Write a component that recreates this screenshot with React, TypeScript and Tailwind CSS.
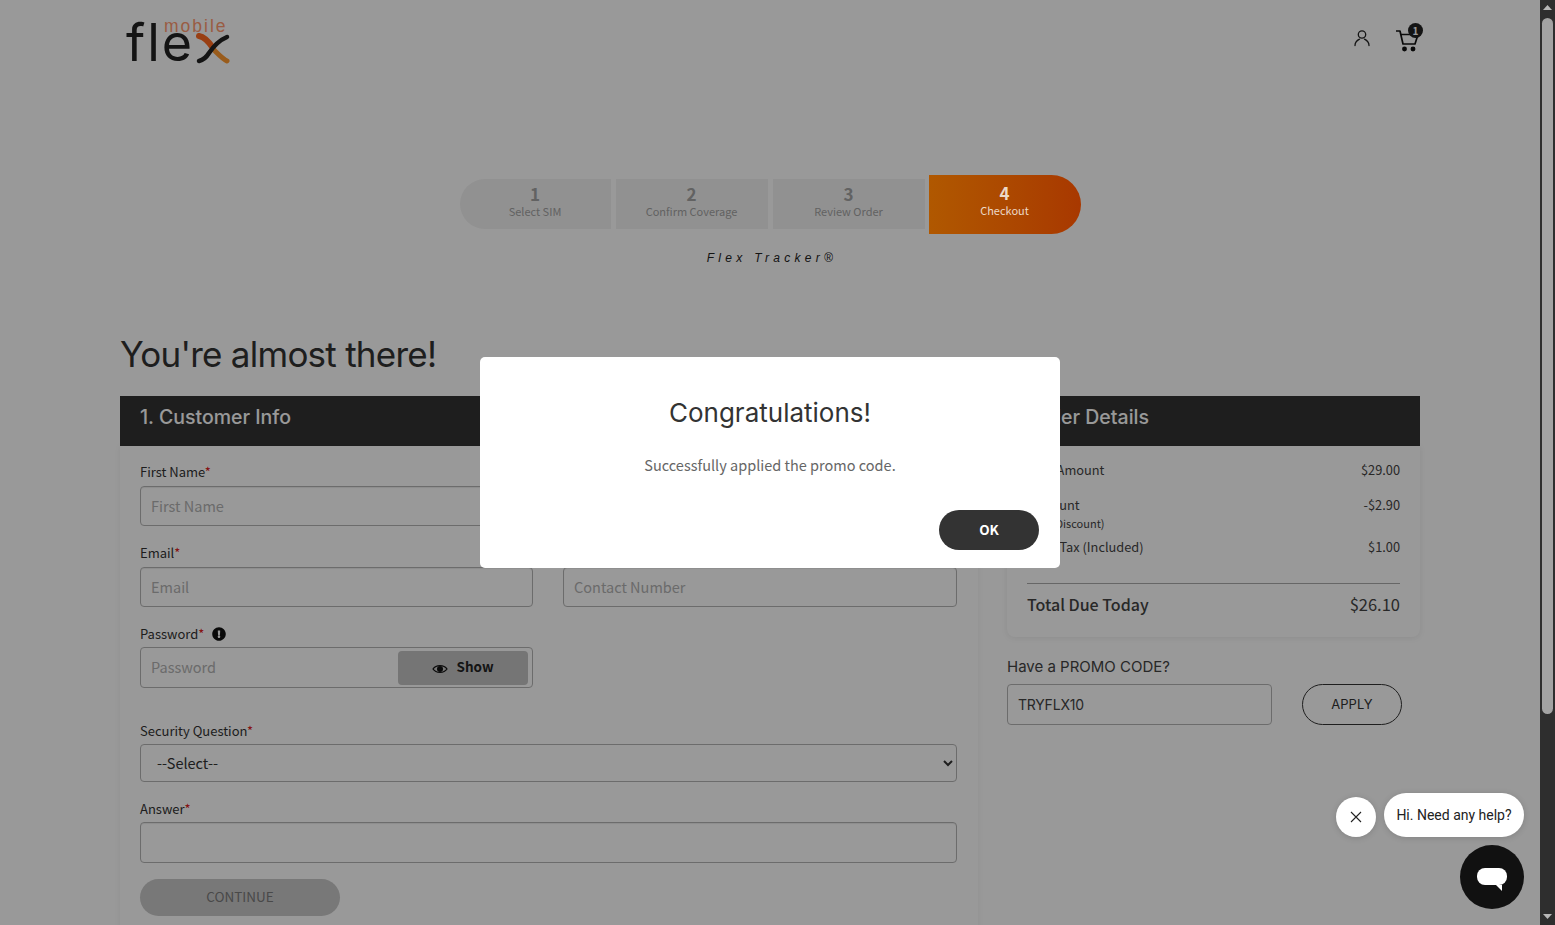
import React from "react";
import { FaExclamationCircle } from "react-icons/fa";

const Req = () => <span className="text-[#e02020]">*</span>;

function Field({ label, placeholder, children }: { label: React.ReactNode; placeholder?: string; children?: React.ReactNode }) {
  return (
    <div className="flex flex-col">
      <label className="mb-1 text-[13px] leading-[21px] text-[#333]">{label}</label>
      {children ?? (
        <input
          placeholder={placeholder}
          className="h-10 w-full rounded border border-[#b5b5b5] bg-white px-[10px] pb-[2px] text-[14.5px] text-[#333] placeholder:text-[#b2b2b2] shadow-[inset_0_1px_1px_rgba(0,0,0,0.08)] outline-none"
        />
      )}
    </div>
  );
}

function Step({ n, label, className }: { n: string; label: string; className: string }) {
  return (
    <div className={`flex flex-col items-center justify-center h-[50px] pb-[6px] bg-[#f2f2f2] text-[#a3a3a3] ${className}`}>
      <span className="text-[17px] font-bold leading-[20px]">{n}</span>
      <span className="text-[11px] leading-[14px]">{label}</span>
    </div>
  );
}

function SummaryRow({ left, right, sub, className = "" }: { left: string; right: string; sub?: string; className?: string }) {
  return (
    <div className={`flex justify-between text-[12.8px] leading-[21px] text-[#444] ${className}`}>
      <div className="flex flex-col">
        <span>{left}</span>
        {sub && <span className="text-[11px] leading-[16px]">{sub}</span>}
      </div>
      <span>{right}</span>
    </div>
  );
}

function Logo() {
  return (
    <div className="relative h-[50px] w-[110px] text-[#222]">
      <span className="absolute left-[38px] top-[-1px] font-['Liberation_Sans',sans-serif] text-[17.5px] leading-[14px] tracking-[2px] text-[#ff9a70]">mobile</span>
      <span className="absolute left-0 top-[13px] font-['Inter',sans-serif] text-[52px] font-normal leading-[20px] tracking-[2px]">fle</span>
      <svg className="absolute left-[70px] top-[13px]" width="34" height="31" viewBox="0 0 34 31" fill="none">
        <path d="M3 3 C9 4 13 9 17 15" stroke="#ff6a20" strokeWidth="6" strokeLinecap="round" />
        <path d="M19 18 C23 22 27 26 31 28" stroke="#ff9a30" strokeWidth="5" strokeLinecap="round" />
        <path d="M31 4 C24 7 17 14 13 20 C10 25 7 27 3 28" stroke="#222" strokeWidth="4.5" strokeLinecap="round" />
      </svg>
    </div>
  );
}

export default function App() {
  return (
    <div className="relative flex h-[925px] w-[1555px] overflow-hidden bg-white font-['Noto_Sans_CJK_JP','Noto_Sans',sans-serif]">
      <main className="w-[1540px] shrink-0">
        <div className="mx-auto w-[1300px]">
          <header className="flex h-[80px] items-start justify-between">
            <div className="ml-[6px] mt-[20px]">
              <Logo />
            </div>
            <div className="mt-[22px] flex items-start gap-[25px]">
              <svg className="mt-[7px]" width="18" height="18" viewBox="0 0 18 18" fill="none" stroke="#222" strokeWidth="1.3">
                <circle cx="9" cy="5.5" r="3.7" />
                <path d="M2 16.5 C2 13 4.5 11.2 6.5 10.2 M16 16.5 C16 13 13.5 11.2 11.5 10.2" strokeLinecap="round" />
              </svg>
              <div className="relative h-[30px] w-[24px]">
                <svg className="absolute left-0 top-[7px]" width="24" height="24" viewBox="0 0 24 24" fill="none" stroke="#111" strokeWidth="1.7">
                  <path d="M0.5 2 H4 L7 15 H19 L22 5.5 H5" strokeLinejoin="round" strokeLinecap="round" />
                  <circle cx="8.5" cy="20" r="1.6" fill="#111" />
                  <circle cx="17" cy="20" r="1.6" fill="#111" />
                </svg>
                <span className="absolute left-[12px] top-[1px] flex h-[15px] w-[15px] items-center justify-center rounded-full bg-[#222] text-[10px] font-bold leading-none text-white">1</span>
              </div>
            </div>
          </header>

          <div className="mt-[95px] flex items-start justify-center">
            <Step n="1" label="Select SIM" className="mt-[4px] w-[151px] rounded-l-full" />
            <Step n="2" label="Confirm Coverage" className="ml-[5px] mt-[4px] w-[152px]" />
            <Step n="3" label="Review Order" className="ml-[5px] mt-[4px] w-[152px]" />
            <div className="relative z-20 ml-[4px] flex h-[59px] w-[152px] flex-col items-center justify-center rounded-r-full bg-gradient-to-r from-[#b05800] to-[#a83800] pb-[9px] text-[#ecd9c8]">
              <span className="text-[17px] font-bold leading-[20px]">4</span>
              <span className="text-[11px] leading-[14px]">Checkout</span>
            </div>
          </div>

          <p className="mt-[16px] pl-[4px] text-center font-['Liberation_Sans',sans-serif] text-[12px] italic leading-[16px] tracking-[4.3px] text-[#222]">
            Flex Tracker®
          </p>

          <h1 className="mt-[67px] font-['Inter',sans-serif] text-[35px] font-normal leading-[43px] tracking-[-0.75px] text-[#333]">You're almost there!</h1>

          <div className="mt-[20px] flex h-[50px] items-center bg-[#333] pb-[6px] font-['Inter',sans-serif] text-[19.5px] font-medium text-white">
            <div className="w-[864px] pl-[20px]">1. Customer Info</div>
            <div className="pl-[20px]">2. Order Details</div>
          </div>

          <div className="flex">
            <section className="flex h-[500px] w-[858px] flex-col bg-white px-5 pt-[15px] shadow-[0_0_6px_rgba(0,0,0,0.06)]">
              <div className="grid grid-cols-[393px_394px] gap-x-[30px] gap-y-4">
                <Field label={<>First Name<Req /></>} placeholder="First Name" />
                <Field label={<>Last Name<Req /></>} placeholder="Last Name" />
                <Field label={<>Email<Req /></>} placeholder="Email" />
                <Field label={<>Contact Number<Req /></>} placeholder="Contact Number" />
              </div>
              <div className="mt-4 w-[393px]">
                <label className="flex h-[21px] items-center text-[13px] text-[#333]">
                  Password<Req />
                  <FaExclamationCircle className="ml-[8px] text-[#111]" size={14} />
                </label>
                <div className="mt-[3px] flex h-[41px] items-center rounded border border-[#b5b5b5] pl-[10px] pr-1">
                  <input placeholder="Password" className="min-w-0 flex-1 bg-transparent pb-[2px] text-[14.5px] outline-none placeholder:text-[#b2b2b2]" />
                  <div className="flex h-[34px] w-[130px] items-center justify-center gap-2 rounded bg-[#c4c4c4] pb-[2px] text-[13.5px] font-bold text-[#222]">
                    <svg width="16" height="16" viewBox="0 0 16 16" className="mt-[4px]">
                      <path d="M1 8 C4 3.5 12 3.5 15 8 C12 12.5 4 12.5 1 8 Z" fill="none" stroke="#111" strokeWidth="1.3" />
                      <circle cx="8" cy="8" r="3" fill="#111" />
                    </svg>
                    Show
                  </div>
                </div>
              </div>
              <div className="mt-[32px] w-[817px]">
                <label className="mb-[3px] block text-[13px] leading-[21px] text-[#333]">Security Question<Req /></label>
                <select className="h-[38px] w-full rounded border border-[#b5b5b5] bg-white pb-[2px] pl-[12px] text-[14.5px] text-[#333]">
                  <option>--Select--</option>
                </select>
              </div>
              <div className="mt-[16px] w-[817px]">
                <label className="mb-[3px] block text-[13px] leading-[21px] text-[#333]">Answer<Req /></label>
                <input className="h-[41px] w-full rounded border border-[#b5b5b5] bg-white shadow-[inset_0_1px_1px_rgba(0,0,0,0.08)] outline-none" />
              </div>
              <button className="mt-[16px] h-[37px] w-[200px] rounded-full bg-[#c8c8c8] pb-[2px] text-[13.5px] text-[#7a7a7a]">CONTINUE</button>
            </section>

            <aside className="ml-[29px] w-[413px]">
              <div className="rounded-b-lg bg-white px-5 pb-[21px] pt-[13px] shadow-[0_1px_6px_rgba(0,0,0,0.08)]">
                <SummaryRow left="Plan Amount" right="$29.00" />
                <SummaryRow left="Discount" right="-$2.90" sub="(10% Discount)" className="mt-[14px]" />
                <SummaryRow left="Total Tax (Included)" right="$1.00" className="mt-[5px]" />
                <div className="mt-[26px] flex justify-between border-t border-[#aaa] pt-[9px] text-[16px] leading-[23px] text-[#444]">
                  <span className="font-medium">Total Due Today</span>
                  <span className="text-[16.5px]">$26.10</span>
                </div>
              </div>
              <p className="mt-[19px] font-['Inter',sans-serif] text-[15px] leading-[22px] text-[#444]">Have a PROMO CODE?</p>
              <div className="mt-[6px] flex">
                <input
                  readOnly
                  value="TRYFLX10"
                  className="h-[41px] w-[265px] rounded border border-[#b5b5b5] px-[10px] font-['Inter',sans-serif] text-[14px] tracking-[-0.2px] text-[#444] outline-none"
                />
                <button className="ml-[30px] h-[41px] w-[100px] rounded-full border border-[#333] font-['Inter',sans-serif] text-[13px] text-[#333]">APPLY</button>
              </div>
            </aside>
          </div>
        </div>
      </main>

      {/* Modal overlay */}
      <div className="absolute bottom-0 left-0 top-0 z-10 w-[1540px] bg-black/40">
        <div className="mx-auto mt-[357px] flex h-[211px] w-[580px] flex-col items-center rounded-[5px] bg-white">
          <h2 className="mt-[37px] font-['Inter',sans-serif] text-[26px] font-normal leading-[38px] text-[#333]">Congratulations!</h2>
          <p className="mt-[22px] text-[14.5px] leading-[22px] text-[#666]">Successfully applied the promo code.</p>
          <div className="mt-[34px] flex w-full justify-end pr-[21px]">
            <button className="h-10 w-[100px] rounded-full bg-[#333] pb-[2px] text-[13.5px] font-bold text-white">OK</button>
          </div>
        </div>
      </div>

      {/* Chat widget */}
      <div className="absolute right-[31px] top-[793px] z-20 flex flex-col items-end font-['Roboto',sans-serif]">
        <div className="flex items-center gap-2">
          <button className="mt-[4px] flex h-10 w-10 items-center justify-center rounded-full bg-white shadow-[0_1px_6px_rgba(0,0,0,0.15)]">
            <svg width="12" height="12" viewBox="0 0 12 12" stroke="#222" strokeWidth="1.1"><path d="M1 1 L11 11 M11 1 L1 11" /></svg>
          </button>
          <div className="flex h-[44px] w-[140px] items-center justify-center rounded-[22px] bg-white text-[14px] text-[#222] shadow-[0_1px_6px_rgba(0,0,0,0.15)]">Hi. Need any help?</div>
        </div>
        <div className="mt-2 flex h-16 w-16 items-center justify-center rounded-full bg-[#111]">
          <svg width="32" height="24" viewBox="0 0 32 24" className="mt-[3px]">
            <rect x="1" y="1" width="30" height="17" rx="8" fill="#fff" />
            <path d="M20 18 L26 18 L26 24 Z" fill="#fff" />
          </svg>
        </div>
      </div>

      {/* Scrollbar */}
      <div className="flex w-[15px] shrink-0 flex-col items-center bg-[#2e2e2e]">
        <svg className="mt-[5px]" width="9" height="6" viewBox="0 0 9 6"><path d="M4.5 0 L9 5 H0 Z" fill="#b8b8b8" /></svg>
        <div className="mt-[7px] h-[696px] w-[11px] rounded-full bg-[#a3a3a3]" />
        <div className="flex-1" />
        <svg className="mb-[6px]" width="9" height="6" viewBox="0 0 9 6"><path d="M4.5 6 L9 1 H0 Z" fill="#b8b8b8" /></svg>
      </div>
    </div>
  );
}
